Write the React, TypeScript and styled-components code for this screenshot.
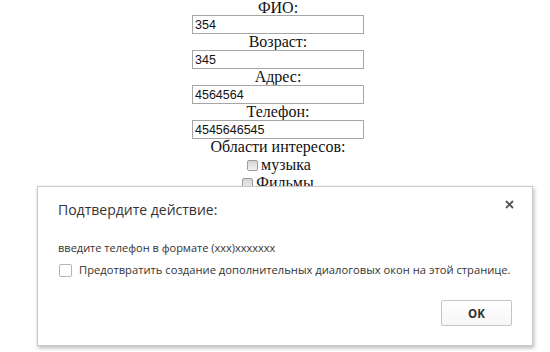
import React from "react";
import styled, { createGlobalStyle } from "styled-components";

const GlobalStyle = createGlobalStyle`
  html, body {
    margin: 0;
    padding: 0;
    background: #ffffff;
  }
  body {
    width: 550px;
    height: 352px;
    overflow: hidden;
    position: relative;
  }
`;

const Page = styled.div`
  position: relative;
  width: 550px;
  height: 352px;
`;

const Form = styled.form`
  display: flex;
  flex-direction: column;
  align-items: center;
  padding-left: 6px;
  font-family: "Liberation Serif", "Times New Roman", serif;
  font-size: 16px;
  color: #111;
`;

const Label = styled.div<{ $h?: number }>`
  line-height: 16px;
  height: ${(p) => p.$h ?? 15}px;
`;

const TextInput = styled.input`
  box-sizing: border-box;
  width: 172px;
  height: 19px;
  margin: 0;
  padding: 0 2px;
  border: 1px solid #a6a6a6;
  font-family: "Liberation Sans", Arial, sans-serif;
  font-size: 12.5px;
  color: #111;
  background: #fff;
  outline: none;
`;

const CheckRow = styled.label<{ $shift?: number }>`
  display: flex;
  align-items: center;
  gap: 3px;
  height: 18px;
  line-height: 18px;
  margin-left: ${(p) => p.$shift ?? 0}px;
`;

const OldBox = styled.input`
  appearance: none;
  box-sizing: border-box;
  width: 11px;
  height: 11px;
  margin: 0;
  border: 1px solid #9c9c9c;
  border-radius: 2px;
  background: linear-gradient(#d4d4d4, #f2f2f2);
`;

const Dialog = styled.div`
  position: absolute;
  left: 37px;
  top: 186px;
  width: 496px;
  height: 160px;
  box-sizing: border-box;
  padding: 14px 16px 0 20px;
  background: #ffffff;
  border: 1px solid #c9c9c9;
  box-shadow: 1px 2px 4px rgba(0, 0, 0, 0.28);
  font-family: "Open Sans", "Noto Sans", sans-serif;
  color: #333;
  display: flex;
  flex-direction: column;
`;

const Header = styled.div`
  display: flex;
  justify-content: space-between;
  align-items: flex-start;
`;

const Title = styled.div`
  font-size: 14px;
  line-height: 18px;
  color: #333;
`;

const Close = styled.button`
  border: none;
  background: none;
  padding: 0;
  margin-top: -4px;
  width: 14px;
  height: 14px;
  display: flex;
  align-items: center;
  justify-content: center;
  color: #555;
`;

const Message = styled.div`
  margin-top: 22px;
  font-size: 11px;
  line-height: 14px;
  color: #333;
`;

const Suppress = styled.label`
  margin-top: 7px;
  display: flex;
  align-items: center;
  gap: 7px;
  font-size: 11.2px;
  line-height: 16px;
  color: #333;
`;

const FlatBox = styled.input`
  appearance: none;
  box-sizing: border-box;
  width: 13px;
  height: 13px;
  margin: 0 0 0 1px;
  border: 1px solid #b5b5b5;
  border-radius: 2px;
  background: #fff;
`;

const Footer = styled.div`
  margin-top: 22px;
  display: flex;
  justify-content: flex-end;
  padding-right: 4px;
`;

const OkButton = styled.button`
  box-sizing: border-box;
  width: 71px;
  height: 26px;
  border: 1px solid #c4c4c4;
  border-radius: 2px;
  background: linear-gradient(#ffffff, #f6f6f6);
  font-family: "Open Sans", "Noto Sans", sans-serif;
  font-weight: 700;
  font-size: 11.5px;
  color: #333;
  padding: 0;
`;

const fields = [
  { label: "ФИО:", value: "354" },
  { label: "Возраст:", value: "345" },
  { label: "Адрес:", value: "4564564" },
  { label: "Телефон:", value: "4545646545" },
];

export default function App() {
  return (
    <Page>
      <GlobalStyle />
      <Form>
        {fields.map((f, i) => (
          <React.Fragment key={f.label}>
            <Label $h={i === 0 ? 15 : 16}>{f.label}</Label>
            <TextInput defaultValue={f.value} />
          </React.Fragment>
        ))}
        <Label $h={17}>Области интересов:</Label>
        <CheckRow $shift={2}>
          <OldBox type="checkbox" />
          музыка
        </CheckRow>
        <CheckRow>
          <OldBox type="checkbox" />
          Фильмы
        </CheckRow>
      </Form>
      <Dialog role="dialog">
        <Header>
          <Title>Подтвердите действие:</Title>
          <Close aria-label="close">
            <svg width="9" height="9" viewBox="0 0 9 9">
              <path d="M1 1 L8 8 M8 1 L1 8" stroke="#555" strokeWidth="1.9" />
            </svg>
          </Close>
        </Header>
        <Message>введите телефон в формате (xxx)xxxxxxx</Message>
        <Suppress>
          <FlatBox type="checkbox" />
          Предотвратить создание дополнительных диалоговых окон на этой странице.
        </Suppress>
        <Footer>
          <OkButton>OK</OkButton>
        </Footer>
      </Dialog>
    </Page>
  );
}
